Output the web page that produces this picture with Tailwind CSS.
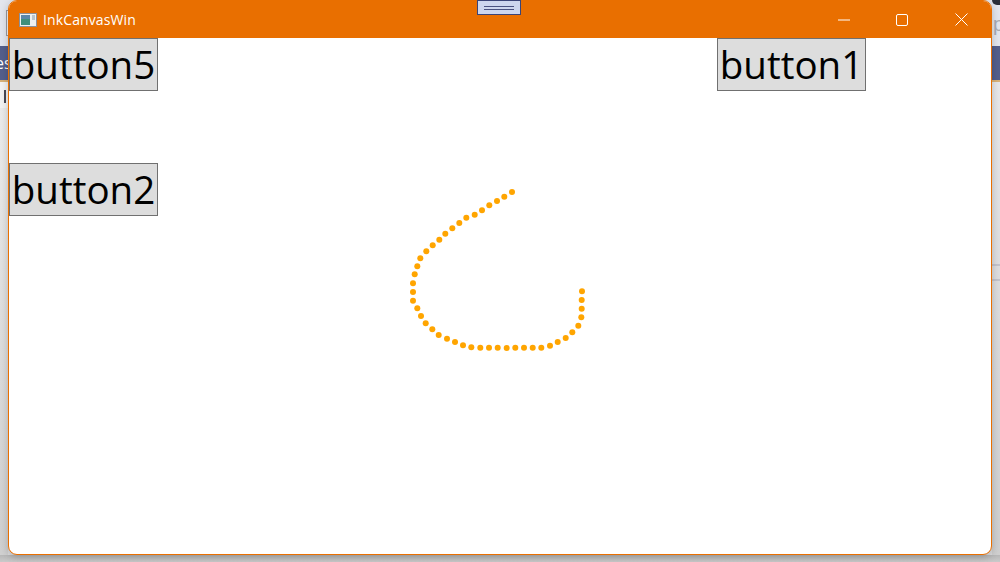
<!DOCTYPE html>
<html lang="en">
<head>
    <meta charset="UTF-8">
    <title>InkCanvasWin</title>
    <script src="https://cdn.jsdelivr.net/npm/@tailwindcss/browser@4"></script>
</head>
<body class="relative w-[1000px] h-[562px] overflow-hidden bg-[#dcdcde] font-['Open_Sans','Noto_Sans',sans-serif]">
<!-- desktop behind the window -->
<div class="absolute left-0 right-0 top-0 h-[46px] bg-[#e3e6ee]"></div>
<div class="absolute left-[6px] w-[4px] top-[10px] h-[26px] bg-[#f6f6f8] border border-[#9a9aa0]"></div>
<div class="absolute right-0 top-0 w-[8px] h-[5px] bg-[#2b2f3a] rounded-bl-[6px]"></div>
<span class="absolute left-[993px] top-[12px] text-[20px] leading-6 text-[#a9abb5] font-['Liberation_Sans']">p</span>
<div class="absolute left-0 right-0 top-[46px] h-[34px] bg-[#545f8c] text-white overflow-hidden">
    <span class="absolute left-[-5px] top-[9px] text-[16px] leading-4">es</span>
</div>
<div class="absolute left-0 right-0 top-[80px] h-[2px] bg-[#d9b37a]"></div>
<div class="absolute left-0 w-[8px] top-[82px] h-[26px] bg-[#f4f4f4]">
    <div class="ml-[4px] mt-[8px] w-[2px] h-[13px] bg-[#4a4a55]"></div>
</div>
<div class="absolute left-0 w-[8px] top-[108px] h-[447px] bg-gradient-to-b from-[#ececec] to-[#d0d0d0]"></div>
<div class="absolute right-0 w-[8px] top-[82px] h-[473px] bg-gradient-to-b from-[#e8e8ea] to-[#cfcfcf]"></div>
<div class="absolute right-0 w-[8px] top-[264px] h-[2px] bg-[#c4c4cc]"></div>
<div class="absolute right-0 w-[8px] top-[279px] h-[2px] bg-[#c4c4cc]"></div>
<div class="absolute left-0 right-0 bottom-0 h-[7px] bg-gradient-to-b from-[#b8b8b8] to-[#cacaca]"></div>

<!-- window -->
<div class="absolute left-[8px] top-0 w-[984px] h-[555px] flex flex-col bg-white border border-[#e96f00] rounded-[9px] overflow-hidden shadow-[0_2px_8px_rgba(0,0,0,0.22)]">
    <div class="h-[37px] shrink-0 flex items-center bg-[#e96f00] text-white">
        <svg class="ml-[10px]" width="18" height="14" viewBox="0 0 18 14">
            <rect x="0.5" y="0.5" width="17" height="13" fill="#eef0f0" stroke="#8a8f9a"/>
            <rect x="2" y="2" width="9" height="10" fill="#3f8f7a"/>
            <rect x="2" y="2" width="9" height="4" fill="#5a86a8"/>
            <rect x="13" y="2" width="3" height="5" fill="#b9c4cc"/>
        </svg>
        <span class="ml-[6px] text-[14px] leading-none font-['Open_Sans'] tracking-[0.12px]">InkCanvasWin</span>
        <div class="ml-auto flex items-center">
            <svg class="mr-[46px]" width="12" height="2" viewBox="0 0 12 2"><path d="M0 1h12" stroke="#fff" stroke-width="1"/></svg>
            <svg class="mr-[47px]" width="12" height="12" viewBox="0 0 12 12"><rect x="0.5" y="0.5" width="11" height="11" rx="1.5" fill="none" stroke="#fff"/></svg>
            <svg class="mr-[23px]" width="13" height="13" viewBox="0 0 13 13"><path d="M0.5 0.5l12 12M12.5 0.5l-12 12" stroke="#fff" stroke-width="1"/></svg>
        </div>
    </div>
    <div class="relative flex-1">
        <div class="absolute left-0 top-0 w-[149px] h-[53px] flex items-center justify-center bg-[#dddddd] border border-[#707070] text-[38.5px] leading-none text-black">button5</div>
        <div class="absolute left-[708px] top-0 w-[149px] h-[53px] flex items-center justify-center bg-[#dddddd] border border-[#707070] text-[38.5px] leading-none text-black">button1</div>
        <div class="absolute left-0 top-[125px] w-[149px] h-[53px] flex items-center justify-center bg-[#dddddd] border border-[#707070] text-[38.5px] leading-none text-black">button2</div>
    </div>
</div>

<!-- ink stroke -->
<svg id="ink" class="absolute left-0 top-0" width="1000" height="562" fill="#ffa500"></svg>

<!-- grip on top of the window -->
<div class="absolute left-[477px] top-0 w-[44px] h-[15px] flex flex-col items-center justify-center gap-[2px] bg-[#cdd6ee] border border-[#3a4478]">
    <div class="w-[30px] h-[1px] bg-[#4a5280]"></div>
    <div class="w-[30px] h-[1px] bg-[#4a5280]"></div>
</div>

<script>
    const points = [
        [512,192],[504.3,196.7],[497,201],[489.3,205.3],[482,210.3],[474.7,214.7],[466.3,217.7],[459.3,223],
        [452.3,228.3],[445.3,233.7],[439.3,239.7],[432.7,245.3],[426.3,251.3],[420.3,258.3],[417.3,266.3],
        [414.7,274.3],[413,283.3],[413,292],[413,300.7],[417.3,308.3],[421,316],[425.7,323.3],[432.3,329.3],
        [438.7,335],[447,338.7],[455,342],[463,345.3],[471.3,347.3],[480.3,347.7],[489,347.7],[497.7,347.7],
        [506.7,348],[515.3,347.7],[524,347.7],[532.7,347.7],[541.3,347.7],[550,345.7],[557.7,342],[565.7,338],
        [572.3,332.3],[578.3,325.7],[581.3,317.3],[581.7,308.7],[581.7,300],[582,291.3]
    ];
    document.getElementById('ink').innerHTML = points
        .map(p => `<circle cx="${p[0]}" cy="${p[1]}" r="3"></circle>`)
        .join('');
</script>
</body>
</html>
